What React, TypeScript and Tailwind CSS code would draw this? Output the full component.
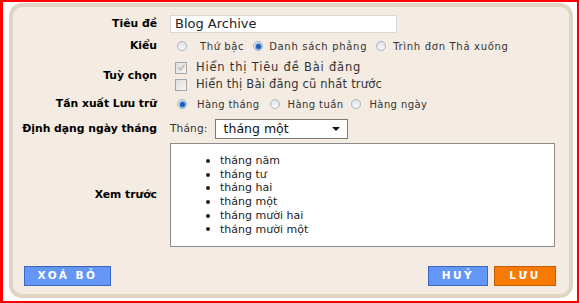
import type { ReactNode } from 'react';

const font = { fontFamily: '"DejaVu Sans", Verdana, sans-serif' };

function Radio({ checked = false }: { checked?: boolean }) {
  return (
    <span className="relative inline-flex h-[10px] w-[10px] shrink-0 items-center justify-center rounded-full border border-[#a9b2bc] bg-gradient-to-b from-[#dfe3e8] to-[#f8f9fa]">
      {checked && <span className="h-[5px] w-[5px] rounded-full bg-[#1f5fb8] shadow-[0_0_0_1px_#7fb0e8]" />}
    </span>
  );
}

function Check({ checked = false }: { checked?: boolean }) {
  return (
    <span className="inline-flex h-[12px] w-[12px] shrink-0 items-center justify-center border border-[#a6a6a6] bg-gradient-to-br from-[#dcdcdc] to-[#f7f7f7]">
      {checked && (
        <svg width="9" height="9" viewBox="0 0 9 9">
          <path d="M1.5 4.5 L3.5 6.8 L7.5 1.8" fill="none" stroke="#b8b8b8" strokeWidth="1.4" />
        </svg>
      )}
    </span>
  );
}

function Row({ label, children, className = '' }: { label: string; children: ReactNode; className?: string }) {
  return (
    <div className={`flex items-center ${className}`}>
      <div className="w-[144px] shrink-0 text-right text-[10.8px] font-bold text-black">{label}</div>
      <div className="ml-[13px] flex items-center">{children}</div>
    </div>
  );
}

function Opt({ checked, text, gap, after, track = 'tracking-[0.4px]' }: { checked?: boolean; text: string; gap: string; after: string; track?: string }) {
  return (
    <span className={`flex items-center ${after}`}>
      <Radio checked={checked} />
      <span className={`${gap} text-[10px] ${track} text-[#333]`}>{text}</span>
    </span>
  );
}

function Btn({ text, color }: { text: string; color: 'blue' | 'orange' }) {
  const c =
    color === 'blue'
      ? 'bg-[#6496f7] border-[#3a66c4]'
      : 'bg-[#f77a05] border-[#c65c00]';
  return (
    <div className={`flex h-[20px] items-center justify-center border text-[10.5px] font-bold tracking-[2.5px] text-white ${c}`}>
      {text}
    </div>
  );
}

export default function App() {
  const months = ['tháng năm', 'tháng tư', 'tháng hai', 'tháng một', 'tháng mười hai', 'tháng mười một'];
  return (
    <div className="h-[303px] w-[579px] bg-white" style={font}>
      <div className="h-full w-full border-l-[3px] border-r-[2px] border-t-[2px] border-b-[2px] border-[#ff0000] bg-white pl-[6px] pr-[4px] pt-[1px] pb-[2px]">
        <div className="h-[295px] w-[564px] rounded-[13px] border-[4px] border-[#e0d5c2] bg-[#f4ece2] pt-[8px]">
          <Row label="Tiêu đề" className="h-[18px]">
            <div className="flex h-[18px] w-[227px] items-center border border-[#d8d8d8] bg-white pl-[4px] text-[13px] text-[#222]">
              Blog Archive
            </div>
          </Row>
          <Row label="Kiểu" className="mt-[5px] h-[16px]">
            <span className="ml-[7px] flex items-center">
              <Opt text="Thứ bậc" gap="ml-[13px]" after="mr-[9px]" track="tracking-[0.6px]" />
              <Opt checked text="Danh sách phẳng" gap="ml-[6px]" after="mr-[9px]" track="tracking-[0.7px]" />
              <Opt text="Trình đơn Thả xuống" gap="ml-[7px]" after="" track="tracking-[0.7px]" />
            </span>
          </Row>
          <Row label="Tuỳ chọn" className="mt-[5px] h-[34px]">
            <div className="ml-[5px] flex flex-col">
              <div className="flex h-[17px] items-center">
                <Check checked />
                <span className="ml-[9px] text-[11.5px] tracking-[0.8px] text-[#333]">Hiển thị Tiêu đề Bài đăng</span>
              </div>
              <div className="flex h-[17px] items-center">
                <Check />
                <span className="ml-[9px] text-[11.5px] tracking-[0.2px] text-[#333]">Hiển thị Bài đăng cũ nhất trước</span>
              </div>
            </div>
          </Row>
          <Row label="Tần xuất Lưu trữ" className="mt-[3px] h-[16px]">
            <span className="ml-[7px] flex items-center">
              <Opt checked text="Hàng tháng" gap="ml-[10px]" after="mr-[10px]" />
              <Opt text="Hàng tuần" gap="ml-[8px]" after="mr-[8px]" />
              <Opt text="Hàng ngày" gap="ml-[8px]" after="" />
            </span>
          </Row>
          <Row label="Định dạng ngày tháng" className="mt-[7px] h-[20px]">
            <span className="text-[10.5px] tracking-[0.2px] text-[#333]">Tháng:</span>
            <div className="ml-[7px] flex h-[20px] w-[133px] items-center justify-between border border-[#7a7a7a] bg-white pl-[8px] pr-[7px] text-[12.5px] text-[#111]">
              <span>tháng một</span>
              <svg width="8" height="4" viewBox="0 0 8 4">
                <path d="M0 0 H8 L4 4 Z" fill="#111" />
              </svg>
            </div>
          </Row>
          <Row label="Xem trước" className="mt-[4px] h-[104px]">
            <div className="h-[104px] w-[385px] border border-[#8a8a8a] bg-white pt-[10px] pl-[35px]">
              <ul className="text-[11px] leading-[13.7px] text-[#222]">
                {months.map((m) => (
                  <li key={m} className="flex items-center">
                    <span className="mr-[10px] h-[4px] w-[4px] rounded-full bg-[#222]" />
                    {m}
                  </li>
                ))}
              </ul>
            </div>
          </Row>
          <div className="mt-[19px] flex items-center pl-[11px] pr-[13px]">
            <div className="w-[87px]">
              <Btn text="XOÁ BỎ" color="blue" />
            </div>
            <div className="ml-auto flex gap-[6px]">
              <div className="w-[60px]">
                <Btn text="HUỶ" color="blue" />
              </div>
              <div className="w-[62px]">
                <Btn text="LƯU" color="orange" />
              </div>
            </div>
          </div>
        </div>
      </div>
    </div>
  );
}
